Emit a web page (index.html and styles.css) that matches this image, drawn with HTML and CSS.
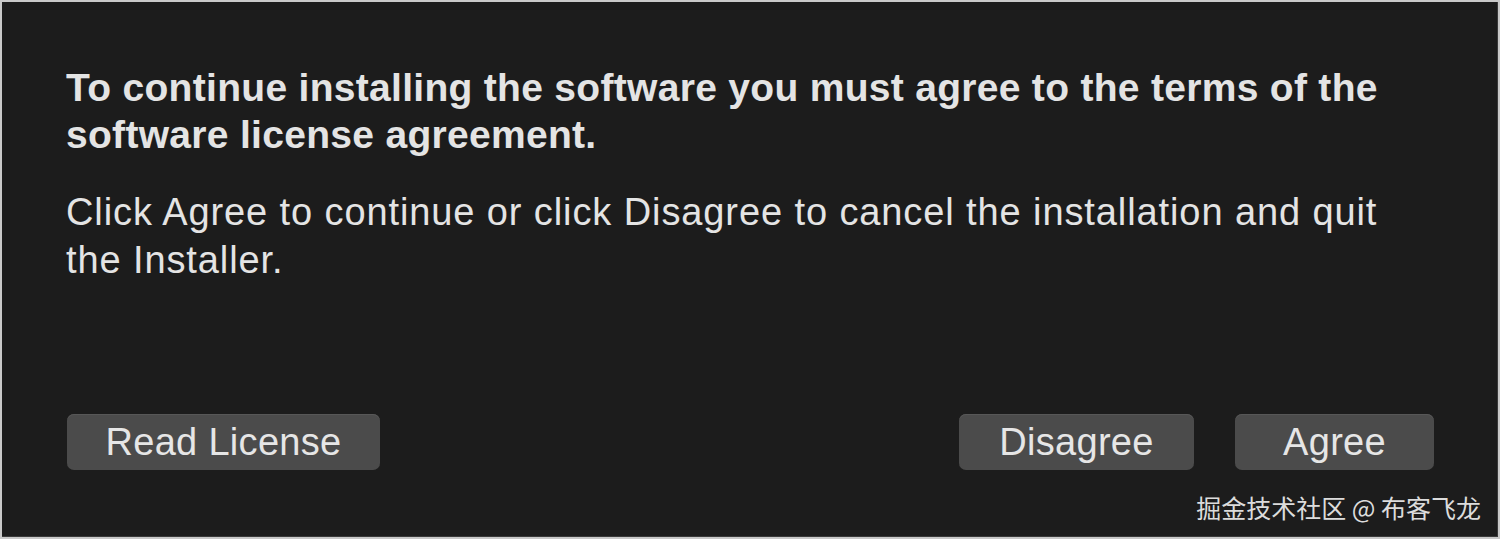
FILE: index.html
```html
<!DOCTYPE html>
<html>
<head>
<meta charset="utf-8">
<link rel="stylesheet" href="styles.css">
</head>
<body>
<div class="frame">
  <div class="dialog">
    <div class="content">
      <p class="title">To continue installing the software you must agree to the terms of the software license agreement.</p>
      <p class="body">Click Agree to continue or click Disagree to cancel the installation and quit the Installer.</p>
    </div>
    <div class="actions">
      <button class="btn btn-read">Read License</button>
      <div class="right">
        <button class="btn btn-dis">Disagree</button>
        <button class="btn btn-agree">Agree</button>
      </div>
    </div>
    <div class="watermark">掘金技术社区 @ 布客飞龙</div>
  </div>
</div>
</body>
</html>
```
FILE: styles.css
```css
html, body {
  margin: 0;
  padding: 0;
  width: 1500px;
  height: 539px;
  overflow: hidden;
  background: #c9c9c9;
}
.frame {
  box-sizing: border-box;
  width: 1500px;
  height: 539px;
  padding: 2px;
}
.dialog {
  box-sizing: border-box;
  height: 100%;
  background: #1c1c1c;
  border-right: 1px solid #3a3a3a;
  border-bottom: 1px solid #3a3a3a;
  display: flex;
  flex-direction: column;
  padding: 62px 0 0 64px;
  font-family: "Liberation Sans", Arial, sans-serif;
  color: #e4e4e4;
}
.content p {
  margin: 0;
  width: 1322px;
}
.title {
  font-weight: bold;
  font-size: 39px;
  letter-spacing: 0.3px;
  line-height: 47px;
}
.body {
  margin-top: 30px !important;
  font-size: 38px;
  letter-spacing: 0.9px;
  line-height: 48px;
}
.actions {
  display: flex;
  justify-content: space-between;
  margin-top: 130px;
  width: 1368px;
}
.right {
  display: flex;
  gap: 41px;
}
.btn {
  height: 56px;
  border: none;
  border-radius: 7px;
  background: #4b4b4b;
  color: #e6e6e6;
  font-family: "Liberation Sans", Arial, sans-serif;
  font-size: 38px;
  letter-spacing: 0.3px;
  padding: 0;
  box-shadow: inset 0 1px 0 #575757;
}
.btn-read { width: 313px; margin-left: 1px; }
.btn-dis { width: 235px; }
.btn-agree { width: 199px; }
.watermark {
  margin-top: 22px;
  align-self: flex-end;
  margin-right: 16px;
  font-family: "Noto Sans CJK SC", sans-serif;
  font-size: 25px;
  line-height: 30px;
  color: #dcdcdc;
}
```
